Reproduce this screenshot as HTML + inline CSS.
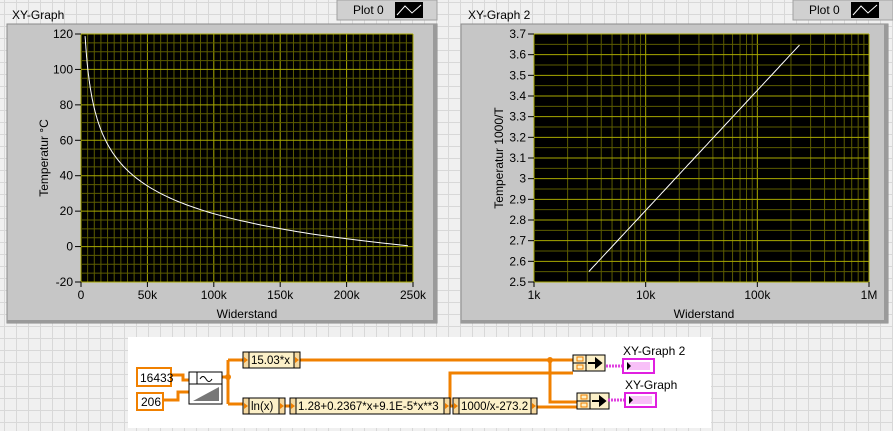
<!DOCTYPE html>
<html><head><meta charset="utf-8"><style>
body{margin:0;width:893px;height:431px;overflow:hidden;font-family:"Liberation Sans",sans-serif;
background-color:#f0f0f0;
background-image:linear-gradient(#d8d8d8 1px,transparent 1px),linear-gradient(90deg,#d8d8d8 1px,transparent 1px);
background-size:12px 12px;background-position:4px 2px;}
svg{position:absolute;left:0;top:0}
</style></head><body>
<svg id="s" width="893" height="431" font-family="Liberation Sans, sans-serif"></svg>
<script>
var s=document.getElementById('s'),h='';
function panel(x0,x1,title,tx,lx){
 h+='<text x="'+tx+'" y="19" font-size="12" fill="#000">'+title+'</text>';
 h+='<rect x="'+lx+'" y="0" width="100" height="20" fill="#d0d0d0" stroke="#a0a0a0"/>';
 h+='<text x="'+(lx+16)+'" y="14" font-size="12">Plot 0</text>';
 h+='<rect x="'+(lx+58)+'" y="2" width="28" height="16" fill="#000"/>';
 h+='<polyline points="'+(lx+60)+',15 '+(lx+68)+',6 '+(lx+75)+',13 '+(lx+84)+',5" stroke="#fff" fill="none"/>';
 h+='<rect x="'+x0+'" y="24" width="'+(x1-x0)+'" height="299" fill="#c6c6c6" stroke="#8a8a8a"/>';
 h+='<rect x="'+(x1-4)+'" y="24" width="4" height="299" fill="#9a9a9a"/>';
 h+='<rect x="'+x0+'" y="320" width="'+(x1-x0)+'" height="3" fill="#9a9a9a"/>';
}
panel(7,437,'XY-Graph',12,337);
panel(461,888,'XY-Graph 2',468,793);
function L(x1,y1,x2,y2,c,w){h+='<line x1="'+x1+'" y1="'+y1+'" x2="'+x2+'" y2="'+y2+'" stroke="'+c+'" stroke-width="'+(w||1)+'"/>';}
var mn='#5c5c00',mj='#a8a800';
var X0=81,X1=413,Y0=34,Y1=282;
h+='<rect x="'+X0+'" y="'+Y0+'" width="'+(X1-X0)+'" height="'+(Y1-Y0)+'" fill="#000"/>';
for(var i=0;i<=50;i++){var x=X0+(X1-X0)*i/50;L(x,Y0,x,Y1,i%10?mn:mj);}
for(var i=0;i<=28;i++){var y=Y0+(Y1-Y0)*i/28;L(X0,y,X1,y,i%4?mn:mj);}
for(var i=0;i<=7;i++){var y=Y0+(Y1-Y0)*i/7;L(X0-6,y,X0,y,'#000');h+='<text x="'+(X0-8)+'" y="'+(y+4)+'" font-size="12" text-anchor="end">'+(120-20*i)+'</text>';}
var xl=['0','50k','100k','150k','200k','250k'];
for(var i=0;i<=5;i++){var x=X0+(X1-X0)*i/5;L(x,Y1,x,Y1+5,'#000');h+='<text x="'+x+'" y="'+(Y1+17)+'" font-size="12" text-anchor="middle">'+xl[i]+'</text>';}
h+='<text x="247" y="318" font-size="12" text-anchor="middle">Widerstand</text>';
h+='<text transform="translate(48,158) rotate(-90)" font-size="12" text-anchor="middle">Temperatur °C</text>';
function yv(R){return 2.55+0.581*(Math.log10(R)-3.49);}
var p='';
for(var R=3100;R<=247000;R*=1.03){var T=1000/yv(R)-273.2;p+=(X0+(X1-X0)*R/250000).toFixed(1)+','+(Y1-(T+20)/140*(Y1-Y0)).toFixed(1)+' ';}
h+='<polyline points="'+p+'" stroke="#fff" fill="none"/>';
var A0=534,A1=869;
h+='<rect x="'+A0+'" y="'+Y0+'" width="'+(A1-A0)+'" height="'+(Y1-Y0)+'" fill="#000"/>';
for(var d=0;d<3;d++)for(var k=1;k<10;k++){var x=A0+(A1-A0)/3*(d+Math.log10(k));L(x,Y0,x,Y1,k==1?mj:mn);}
L(A1,Y0,A1,Y1,mj);
for(var i=0;i<=24;i++){var y=Y0+(Y1-Y0)*i/24;L(A0,y,A1,y,i%2?mn:mj);}
for(var i=0;i<=12;i++){var y=Y0+(Y1-Y0)*i/12;L(A0-6,y,A0,y,'#000');var v=(3.7-0.1*i).toFixed(1).replace('3.0','3');h+='<text x="'+(A0-8)+'" y="'+(y+4)+'" font-size="12" text-anchor="end">'+v+'</text>';}
var xl2=['1k','10k','100k','1M'];
for(var i=0;i<4;i++){var x=A0+(A1-A0)*i/3;L(x,Y1,x,Y1+5,'#000');h+='<text x="'+x+'" y="'+(Y1+17)+'" font-size="12" text-anchor="middle">'+xl2[i]+'</text>';}
h+='<text x="704" y="318" font-size="12" text-anchor="middle">Widerstand</text>';
h+='<text transform="translate(503,158) rotate(-90)" font-size="12" text-anchor="middle">Temperatur 1000/T</text>';
p='';
for(var R=3100;R<=247000;R*=1.05){p+=(A0+(A1-A0)*(Math.log10(R)-3)/3).toFixed(1)+','+(Y1-(yv(R)-2.5)/1.2*(Y1-Y0)).toFixed(1)+' ';}
h+='<polyline points="'+p+'" stroke="#fff" fill="none"/>';
h+='<rect x="128" y="337" width="583" height="91" fill="#fff"/>';
var O='#f08000';
function W(pts){h+='<polyline points="'+pts+'" stroke="'+O+'" stroke-width="3" fill="none"/>';}
W('171,375 183,375 183,380 189,380');W('163,400 178,400 178,392 189,392');
W('222,377 228,377');W('228,360 228,404');W('228,360 243,360');W('228,404 243,404');
W('300,360 573,360');W('550,360 550,402 577,402');
W('450,406 450,373 573,373');
W('285,406 290,406');W('450,406 453,406');W('537,407 577,407');
h+='<circle cx="550" cy="360" r="3" fill="'+O+'"/><circle cx="228" cy="377" r="3" fill="'+O+'"/>';
function node(x,y,w,t){h+='<rect x="'+x+'" y="'+y+'" width="'+w+'" height="16" fill="#fcf0c8" stroke="#000"/>';
 h+='<rect x="'+x+'" y="'+y+'" width="6" height="16" fill="#f4d8a0" stroke="#000"/><rect x="'+(x+w-6)+'" y="'+y+'" width="6" height="16" fill="#f4d8a0" stroke="#000"/>';
 h+='<polygon points="'+(x+1)+','+(y+5)+' '+(x+5)+','+(y+8)+' '+(x+1)+','+(y+11)+'" fill="'+O+'"/><polygon points="'+(x+w-5)+','+(y+5)+' '+(x+w-1)+','+(y+8)+' '+(x+w-5)+','+(y+11)+'" fill="'+O+'"/>';
 h+='<text x="'+(x+8)+'" y="'+(y+12)+'" font-size="11.5">'+t+'</text>';}
node(243,352,57,'15.03*x');node(243,398,42,'ln(x)');node(290,398,160,'1.28+0.2367*x+9.1E-5*x**3');node(453,398,84,'1000/x-273.2');
h+='<rect x="137" y="368" width="34" height="18" fill="#fff" stroke="'+O+'" stroke-width="2"/><text x="140" y="382" font-size="12">16433</text>';
h+='<rect x="137" y="393" width="26" height="17" fill="#fff" stroke="'+O+'" stroke-width="2"/><text x="141" y="406" font-size="12">206</text>';
h+='<rect x="189" y="372" width="33" height="32" fill="#fff" stroke="#000"/><line x1="189" y1="384" x2="222" y2="384" stroke="#000"/><line x1="197" y1="372" x2="197" y2="384" stroke="#000"/>';
h+='<path d="M200 379 q3 -5 6 0 q3 5 6 0" stroke="#000" fill="none"/><polygon points="193,401 219,387 219,401" fill="#777"/>';
function bund(x,y){h+='<rect x="'+x+'" y="'+y+'" width="32" height="16" fill="#fcf0c8" stroke="#000"/><line x1="'+(x+13)+'" y1="'+y+'" x2="'+(x+13)+'" y2="'+(y+16)+'" stroke="#000"/><line x1="'+x+'" y1="'+(y+8)+'" x2="'+(x+13)+'" y2="'+(y+8)+'" stroke="#000"/>';
 h+='<rect x="'+(x+4)+'" y="'+(y+2)+'" width="6" height="4" fill="none" stroke="'+O+'"/><rect x="'+(x+4)+'" y="'+(y+10)+'" width="6" height="4" fill="none" stroke="'+O+'"/>';
 h+='<path d="M'+(x+15)+' '+(y+8)+' h10 M'+(x+23)+' '+(y+4)+' l5 4 l-5 4z" stroke="#000" stroke-width="2" fill="#000"/>';}
bund(573,355);bund(577,393);
function ind(x,y){h+='<line x1="'+(x-17)+'" y1="'+(y+7)+'" x2="'+x+'" y2="'+(y+7)+'" stroke="#e040e0" stroke-width="3" stroke-dasharray="2,1"/><rect x="'+x+'" y="'+y+'" width="31" height="14" fill="#fff" stroke="#e020e0" stroke-width="2"/><rect x="'+(x+4)+'" y="'+(y+3)+'" width="23" height="8" fill="#f8c0f8"/><polygon points="'+(x+4)+','+(y+3)+' '+(x+8)+','+(y+7)+' '+(x+4)+','+(y+11)+'" fill="#000"/>';}
ind(623,359);ind(625,393);
h+='<text x="623" y="355" font-size="12">XY-Graph 2</text><text x="625" y="389" font-size="12">XY-Graph</text>';
s.innerHTML=h;
</script>
</body></html>
